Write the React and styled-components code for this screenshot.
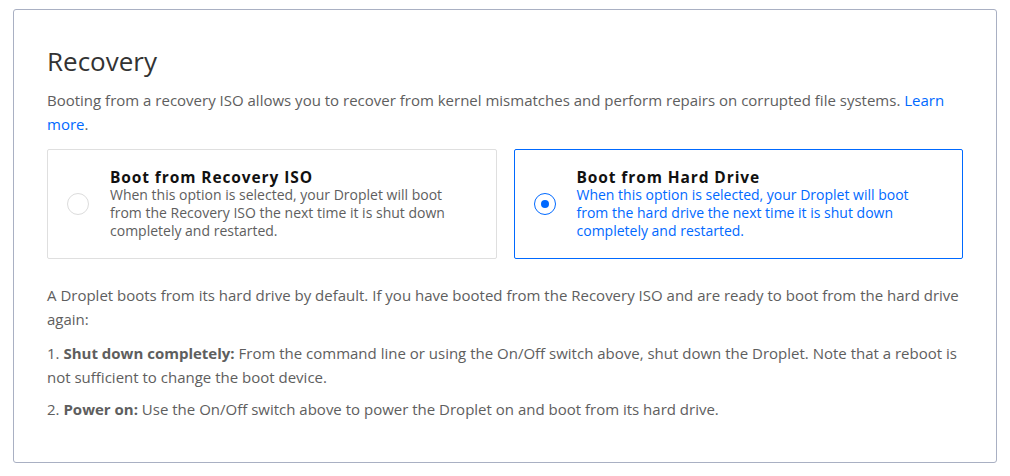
import styled, { createGlobalStyle } from "styled-components";

const Global = createGlobalStyle`
  body {
    margin: 0;
    background: #fff;
    font-family: "Open Sans", "Liberation Sans", sans-serif;
  }
`;

const Page = styled.div`
  padding: 9px 13px 12px 13px;
`;

const Panel = styled.section`
  border: 1px solid #a9b0c3;
  border-radius: 3px;
  padding: 36px 33px 41px 33px;
  color: #5e5e5e;
`;

const Title = styled.h2`
  margin: 0 0 12px;
  font-size: 26px;
  font-weight: 400;
  color: #333;
  line-height: 30px;
`;

const Text = styled.p`
  margin: 0 0 ${(p) => p.$gap ?? 10}px;
  font-size: 15px;
  line-height: 24px;
`;

const Link = styled.a`
  color: #0069ff;
  text-decoration: none;
`;

const Options = styled.div`
  display: grid;
  grid-template-columns: 1fr 1fr;
  gap: 17px;
  margin: 0 0 24px;
`;

const Option = styled.label`
  display: flex;
  align-items: center;
  gap: 21px;
  height: 110px;
  box-sizing: border-box;
  padding: 0 19px;
  border: 1px solid ${(p) => (p.$active ? "#0069ff" : "#dfdfdf")};
  border-radius: 2px;
  cursor: pointer;
`;

const Radio = styled.span`
  flex: 0 0 auto;
  width: 22px;
  height: 22px;
  box-sizing: border-box;
  border-radius: 50%;
  border: ${(p) => (p.$active ? "1.5px solid #0069ff" : "1px solid #dcdcdc")};
  display: flex;
  align-items: center;
  justify-content: center;

  &::after {
    content: "";
    display: ${(p) => (p.$active ? "block" : "none")};
    width: 8px;
    height: 8px;
    border-radius: 50%;
    background: #0069ff;
  }
`;

const OptionBody = styled.div`
  display: flex;
  flex-direction: column;
`;

const OptionTitle = styled.strong`
  font-size: 15.5px;
  font-weight: 700;
  letter-spacing: 0.9px;
  color: #111;
  line-height: 18px;
`;

const OptionDesc = styled.span`
  font-size: 14px;
  line-height: 18px;
  color: ${(p) => (p.$active ? "#0069ff" : "#5e5e5e")};
`;

const options = [
  {
    key: "iso",
    title: "Boot from Recovery ISO",
    desc: "When this option is selected, your Droplet will boot from the Recovery ISO the next time it is shut down completely and restarted.",
  },
  {
    key: "disk",
    title: "Boot from Hard Drive",
    desc: "When this option is selected, your Droplet will boot from the hard drive the next time it is shut down completely and restarted.",
  },
];

export default function App() {
  const selected = "disk";
  return (
    <Page>
      <Global />
      <Panel>
        <Title>Recovery</Title>
        <Text $gap={13}>
          Booting from a recovery ISO allows you to recover from kernel
          mismatches and perform repairs on corrupted file systems.{" "}
          <Link href="#">Learn more</Link>.
        </Text>
        <Options>
          {options.map((o) => {
            const active = o.key === selected;
            return (
              <Option key={o.key} $active={active}>
                <Radio $active={active} />
                <OptionBody>
                  <OptionTitle>{o.title}</OptionTitle>
                  <OptionDesc $active={active}>{o.desc}</OptionDesc>
                </OptionBody>
              </Option>
            );
          })}
        </Options>
        <Text>
          A Droplet boots from its hard drive by default. If you have booted
          from the Recovery ISO and are ready to boot from the hard drive
          again:
        </Text>
        <Text $gap={8}>
          1. <b>Shut down completely:</b> From the command line or using the
          On/Off switch above, shut down the Droplet. Note that a reboot is not
          sufficient to change the boot device.
        </Text>
        <Text $gap={0}>
          2. <b>Power on:</b> Use the On/Off switch above to power the Droplet
          on and boot from its hard drive.
        </Text>
      </Panel>
    </Page>
  );
}
